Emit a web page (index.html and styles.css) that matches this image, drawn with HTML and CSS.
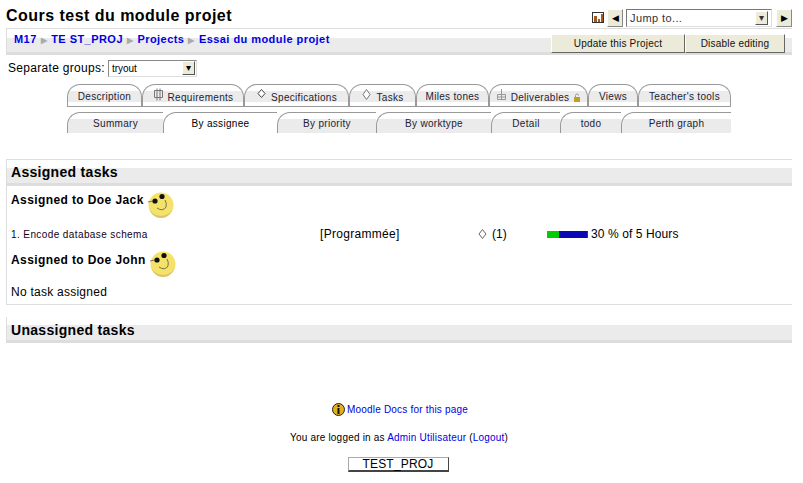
FILE: index.html
```html
<!DOCTYPE html>
<html lang="en">
<head>
  <meta charset="UTF-8" />
  <title>Cours test du module projet</title>
  <link rel="stylesheet" href="styles.css">
</head>
<body>
  <div class="header">
    <h1>Cours test du module projet</h1>
    <div class="jump">
      <svg class="log-icon" width="12" height="11" viewBox="0 0 12 11"><rect x="0.5" y="0.5" width="11" height="10" fill="#fff" stroke="#333"/><rect x="2" y="4" width="3" height="6" fill="#a5591c"/><rect x="6" y="7" width="2" height="3" fill="#a5591c"/><rect x="9" y="2" width="2" height="8" fill="#a5591c"/></svg>
      <button class="arrow">&#9664;</button>
      <div class="jump-select"><span>Jump to...</span><i class="drop">&#9662;</i></div>
      <button class="arrow">&#9654;</button>
    </div>
  </div>

  <div class="navbar">
    <div class="crumbs">
      <a href="#">M17</a><b>&#9654;</b><a href="#">TE ST_PROJ</a><b>&#9654;</b><a href="#">Projects</a><b>&#9654;</b><a href="#">Essai du module projet</a>
    </div>
    <div class="nav-buttons">
      <button class="update">Update this Project</button>
      <button class="editing">Disable editing</button>
    </div>
  </div>

  <div class="groups">
    <span>Separate groups:</span>
    <div class="group-select"><span>tryout</span><i class="drop">&#9662;</i></div>
  </div>

  <div class="tabs row-one">
    <a class="tab" href="#">Description</a>
    <a class="tab" href="#"><svg width="11" height="13" viewBox="0 0 11 13"><path d="M1.500 2.500h8v7h-8zM4 .5v12M7 .5v12" fill="none" stroke="#777"/></svg><span>Requirements</span></a>
    <a class="tab" href="#"><svg width="11" height="13" viewBox="0 0 11 13"><path d="M5.500 1.500l3.500 4-3.500 4-3.500-4z" fill="#fff" stroke="#444"/></svg><span>Specifications</span></a>
    <a class="tab" href="#"><svg width="11" height="13" viewBox="0 0 11 13"><path d="M5.500 1.500l3.500 5-3.500 5-3.500-5z" fill="#fff" stroke="#777"/></svg><span>Tasks</span></a>
    <a class="tab" href="#">Miles tones</a>
    <a class="tab" href="#"><svg width="11" height="13" viewBox="0 0 11 13"><path d="M1.500 6.500h8v5h-8zM5.500 1v11M1.500 9h8" fill="none" stroke="#999"/></svg><span>Deliverables</span><svg class="lock" width="8" height="9" viewBox="0 0 8 9"><rect x="1" y="4" width="6" height="5" fill="#c0a020"/><path d="M2.500 4V2.500a1.500 1.500 0 0 1 3 0" fill="none" stroke="#999"/></svg></a>
    <a class="tab" href="#">Views</a>
    <a class="tab" href="#">Teacher's tools</a>
  </div>
  <div class="tabs row-two">
    <a class="tab" href="#">Summary</a>
    <a class="tab here" href="#">By assignee</a>
    <a class="tab" href="#">By priority</a>
    <a class="tab" href="#">By worktype</a>
    <a class="tab" href="#">Detail</a>
    <a class="tab" href="#">todo</a>
    <a class="tab" href="#">Perth graph</a>
  </div>

  <div class="box assigned">
    <h2>Assigned tasks</h2>
    <h3>Assigned to Doe Jack
      <svg class="smiley" width="27" height="27" viewBox="0 0 27 27"><circle cx="14" cy="14" r="12.500" fill="#f5e26a"/><path d="M2 15a12 12 0 0 0 24 0a12 10 0 0 1-24 0z" fill="#d8c66a"/><circle cx="8" cy="10" r="2.600" fill="#111"/><circle cx="15" cy="5.500" r="2.600" fill="#111"/><path d="M10 17q6 4 9-1M19 16q1-4-1-7M1 11l5-1" fill="none" stroke="#554" stroke-width="0.800"/></svg>
    </h3>
    <div class="task">
      <span class="task-name">1. Encode database schema</span>
      <span class="status">[Programmée]</span>
      <span class="count"><svg width="11" height="13" viewBox="0 0 11 13"><path d="M5.500 1.500l3.500 4.500-3.500 4.500-3.500-4.500z" fill="#fff" stroke="#666"/></svg>(1)</span>
      <span class="progress"><span class="bar"><i class="done" style="width:30%"></i></span>30 % of 5 Hours</span>
    </div>
    <h3 class="second">Assigned to Doe John
      <svg class="smiley" width="27" height="27" viewBox="0 0 27 27"><circle cx="14" cy="14" r="12.500" fill="#f5e26a"/><path d="M2 15a12 12 0 0 0 24 0a12 10 0 0 1-24 0z" fill="#d8c66a"/><circle cx="8" cy="10" r="2.600" fill="#111"/><circle cx="15" cy="5.500" r="2.600" fill="#111"/><path d="M10 17q6 4 9-1M19 16q1-4-1-7M1 11l5-1" fill="none" stroke="#554" stroke-width="0.800"/></svg>
    </h3>
    <p class="none">No task assigned</p>
  </div>

  <div class="box unassigned">
    <h2>Unassigned tasks</h2>
  </div>

  <div class="footer">
    <p class="docs"><svg width="13" height="13" viewBox="0 0 13 13"><circle cx="6.500" cy="6.500" r="6" fill="#e0b020" stroke="#222"/><rect x="5.500" y="2" width="2" height="2" fill="#111"/><rect x="5.500" y="5" width="2" height="6" fill="#111"/></svg><a href="#">Moodle Docs for this page</a></p>
    <p class="login">You are logged in as <a href="#">Admin Utilisateur</a> (<a href="#">Logout</a>)</p>
    <a class="home" href="#">TEST_PROJ</a>
  </div>
</body>
</html>
```

FILE: styles.css
```css
html {
  background-color: #fff;
}
body {
  margin: 0;
  padding: 0 11px 0 6px;
  height: 483px;
  box-sizing: border-box;
  overflow: hidden;
  font-family: "Liberation Sans", Arial, sans-serif;
  font-size: 12px;
  color: #000;
}
a {
  color: #0000e0;
  text-decoration: none;
}
button {
  font-family: "Liberation Sans", Arial, sans-serif;
  padding: 0;
}
.drop {
  width: 13px;
  height: 14px;
  background-color: #ecead8;
  border: 1px solid;
  border-color: #fff #555 #555 #fff;
  box-sizing: border-box;
  font-style: normal;
  font-size: 10px;
  line-height: 12px;
  text-align: center;
}

/* header */
.header {
  display: flex;
  justify-content: space-between;
  height: 28px;
  border-bottom: 1px solid #ddd;
}
h1 {
  margin: 7px 0 0;
  font-size: 16px;
  line-height: 18px;
  letter-spacing: 0.47px;
}
.jump {
  display: flex;
  align-items: center;
  height: 19px;
  margin-top: 8px;
  font-size: 11px;
}
.log-icon {
  margin-right: 3px;
}
.arrow {
  width: 16px;
  height: 18px;
  background-color: #ecead8;
  border: 1px solid;
  border-color: #fff #888 #888 #fff;
  color: #000;
  font-size: 9px;
  line-height: 14px;
}
.jump-select {
  display: flex;
  justify-content: space-between;
  align-items: center;
  width: 146px;
  height: 18px;
  margin: 0 4px 0 3px;
  padding: 0 3px;
  border: 1px solid;
  border-color: #777 #ddd #ddd #777;
  box-sizing: border-box;
  color: #333;
  letter-spacing: 0.4px;
}

/* breadcrumb bar */
.navbar {
  display: flex;
  justify-content: space-between;
  height: 26px;
  border-left: 1px solid #ddd;
  background: linear-gradient(#fff 9px, #ebebeb 9px, #ebebeb 23px, #ddd 23px);
}
.crumbs {
  padding: 4px 0 0 7px;
  font-size: 11px;
  font-weight: bold;
  letter-spacing: 0.45px;
}
.crumbs a {
  color: #0000e6;
}
.crumbs b {
  margin: 0 4px;
  font-size: 8px;
  color: #aaa;
}
.nav-buttons {
  display: flex;
  height: 19px;
  margin: 5px 7px 0 0;
}
.nav-buttons button {
  height: 19px;
  background-color: #ecead8;
  border: 1px solid;
  border-color: #fff #666 #666 #fff;
  font-size: 10px;
  letter-spacing: 0.2px;
  color: #111;
}
.update {
  width: 134px;
}
.editing {
  width: 100px;
}

/* groups */
.groups {
  display: flex;
  align-items: center;
  gap: 3px;
  height: 18px;
  margin: 4px 0 0 2px;
  font-size: 12px;
  letter-spacing: 0.3px;
}
.group-select {
  display: flex;
  justify-content: space-between;
  align-items: center;
  width: 89px;
  height: 17px;
  padding: 0 1px 0 3px;
  border: 1px solid;
  border-color: #888 #ddd #ddd #888;
  box-sizing: border-box;
  font-size: 10px;
  letter-spacing: 0;
}

/* tabs */
.tabs {
  display: grid;
  margin-left: 61px;
  width: 664px;
  font-size: 10px;
  text-align: center;
}
.row-one {
  grid-template-columns: 75px 102px 105px 67px 73px 99px 50px 93px;
  height: 22px;
  margin-top: 7px;
  border-bottom: 1px solid #999;
}
.row-two {
  grid-template-columns: 96px 114px 99px 115px 69px 61px 110px;
  height: 21px;
  margin-top: 5px;
}
.tab {
  display: flex;
  justify-content: center;
  align-items: center;
  gap: 4px;
  padding-top: 2px;
  color: #223;
  letter-spacing: 0.3px;
  border: 1px solid #999;
  border-bottom: 0;
  background: linear-gradient(#fff 6px, #ebebeb 6px, #ebebeb 17px, #fff 17px);
  box-sizing: border-box;
  border-radius: 13px 13px 0 0;
}
.tab svg {
  margin-top: -4px;
}
.tab span {
  margin-top: 2px;
}
.tab .lock {
  margin-top: 2px;
}
.row-two .tab {
  padding-top: 0;
  border-right: 0;
  border-radius: 13px 0 0 0;
  background: linear-gradient(#fff 6px, #ebebeb 6px);
}
.row-two .here {
  background: #fff;
  color: #000;
}

/* task boxes */
.box {
  border-left: 1px solid #ddd;
}
.assigned {
  height: 146px;
  margin-top: 26px;
  border-top: 1px solid #ddd;
  border-bottom: 1px solid #ddd;
  box-sizing: border-box;
}
.unassigned {
  height: 26px;
  margin-top: 12px;
}
h2 {
  margin: 0;
  padding-left: 4px;
  height: 26px;
  box-sizing: border-box;
  font-size: 14px;
  line-height: 25px;
  letter-spacing: 0.3px;
  background: linear-gradient(#fff 8px, #ebebeb 8px, #ebebeb 23px, #ddd 23px);
}
.unassigned h2 {
  line-height: 27px;
}
h3 {
  display: flex;
  align-items: center;
  gap: 3px;
  margin: 0 0 0 4px;
  height: 27px;
  font-size: 12px;
  letter-spacing: 0.4px;
  line-height: 26px;
}
.smiley {
  margin-top: 9px;
}
h3.second {
  margin-top: -1px;
}
h3.second .smiley {
  margin-top: 8px;
}
.task {
  display: grid;
  grid-template-columns: 309px 157px 70px 1fr;
  align-items: center;
  height: 26px;
  margin: 8px 0 0 4px;
}
.status {
  letter-spacing: 0.3px;
}
.task-name {
  font-size: 10px;
  letter-spacing: 0.4px;
  color: #102;
}
.count {
  display: flex;
  align-items: center;
  gap: 4px;
}
.progress {
  display: flex;
  align-items: center;
  gap: 3px;
  letter-spacing: 0.1px;
}
.bar {
  width: 41px;
  height: 7px;
  background-color: #0a0ab4;
  border-right: 1px solid #c00;
  box-sizing: border-box;
}
.done {
  display: block;
  height: 7px;
  background-color: #0c0;
}
.none {
  margin: 12px 0 0 4px;
  letter-spacing: 0.25px;
}

/* footer */
.footer {
  margin-top: 60px;
  padding-right: 2px;
  text-align: center;
  font-size: 10px;
  letter-spacing: 0.2px;
}
.footer p {
  margin: 0;
}
.footer .docs {
  padding-left: 4px;
}
.docs svg {
  margin-right: 2px;
  vertical-align: -3px;
}
.footer .login {
  padding: 16px 0 0 2px;
}
.home {
  display: block;
  width: 101px;
  height: 15px;
  margin: 14px auto 0;
  border: 1px solid;
  border-color: #aaa #444 #444 #aaa;
  border-bottom-width: 2px;
  box-sizing: border-box;
  color: #000;
  font-size: 12px;
  line-height: 13px;
}
```
